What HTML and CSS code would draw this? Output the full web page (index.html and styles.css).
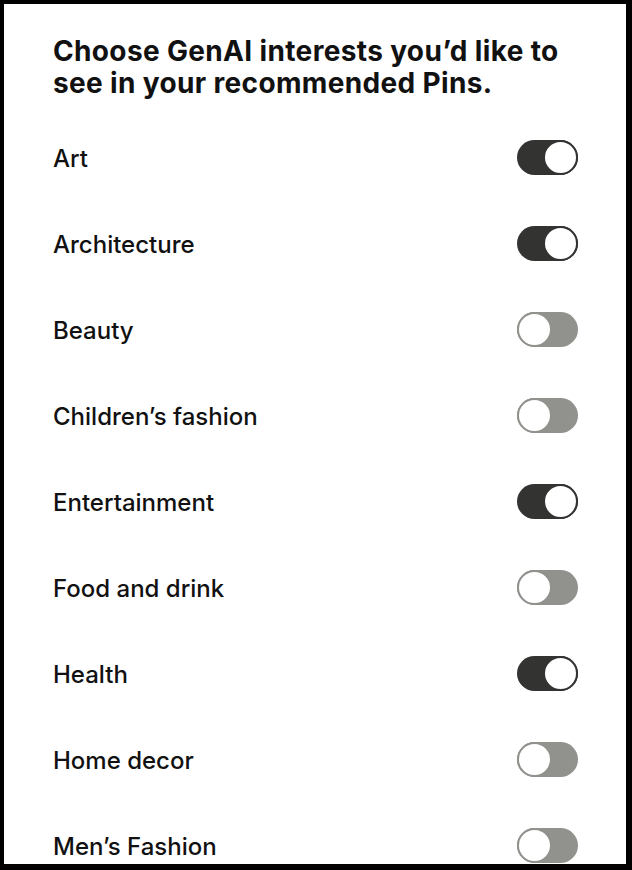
FILE: index.html
```html
<!DOCTYPE html>
<html>
<head>
<meta charset="utf-8">
<link rel="stylesheet" href="styles.css">
</head>
<body>
<div class="screen">
  <h1 class="title">Choose GenAI interests you’d like to see in your recommended Pins.</h1>
  <ul class="list">
    <li class="row"><span class="label">Art</span><span class="toggle on"></span></li>
    <li class="row"><span class="label">Architecture</span><span class="toggle on"></span></li>
    <li class="row"><span class="label">Beauty</span><span class="toggle"></span></li>
    <li class="row"><span class="label">Children’s fashion</span><span class="toggle"></span></li>
    <li class="row"><span class="label">Entertainment</span><span class="toggle on"></span></li>
    <li class="row"><span class="label">Food and drink</span><span class="toggle"></span></li>
    <li class="row"><span class="label">Health</span><span class="toggle on"></span></li>
    <li class="row"><span class="label">Home decor</span><span class="toggle"></span></li>
    <li class="row"><span class="label">Men’s Fashion</span><span class="toggle"></span></li>
  </ul>
</div>
</body>
</html>
```

FILE: styles.css
```css
html, body {
  margin: 0;
  padding: 0;
  background: #000;
}
body {
  width: 632px;
  height: 870px;
  overflow: hidden;
}
.screen {
  margin: 4px 6px 6px 4px;
  height: 860px;
  background: #fff;
  overflow: hidden;
  box-sizing: border-box;
  padding: 31px 48px 0 49px;
  font-family: Inter, "Liberation Sans", sans-serif;
  color: #111;
}
.title {
  margin: 0;
  font-size: 28px;
  line-height: 32px;
  font-weight: 700;
  letter-spacing: 0.35px;
  width: 540px;
}
.list {
  list-style: none;
  margin: 15px 0 0;
  padding: 0;
}
.row {
  height: 86px;
  display: flex;
  align-items: center;
  justify-content: space-between;
}
.label {
  font-size: 24px;
  font-weight: 500;
  padding-top: 2px;
}
.toggle {
  width: 61px;
  height: 35px;
  border-radius: 18px;
  background: #91918d;
  position: relative;
  box-sizing: border-box;
}
.toggle::after {
  content: "";
  position: absolute;
  top: 0;
  left: 0;
  width: 35px;
  height: 35px;
  box-sizing: border-box;
  border-radius: 50%;
  background: #fff;
  border: 2px solid #91918d;
}
.toggle.on {
  background: #333331;
}
.toggle.on::after {
  left: auto;
  right: 0;
  border-color: #333331;
}
```
